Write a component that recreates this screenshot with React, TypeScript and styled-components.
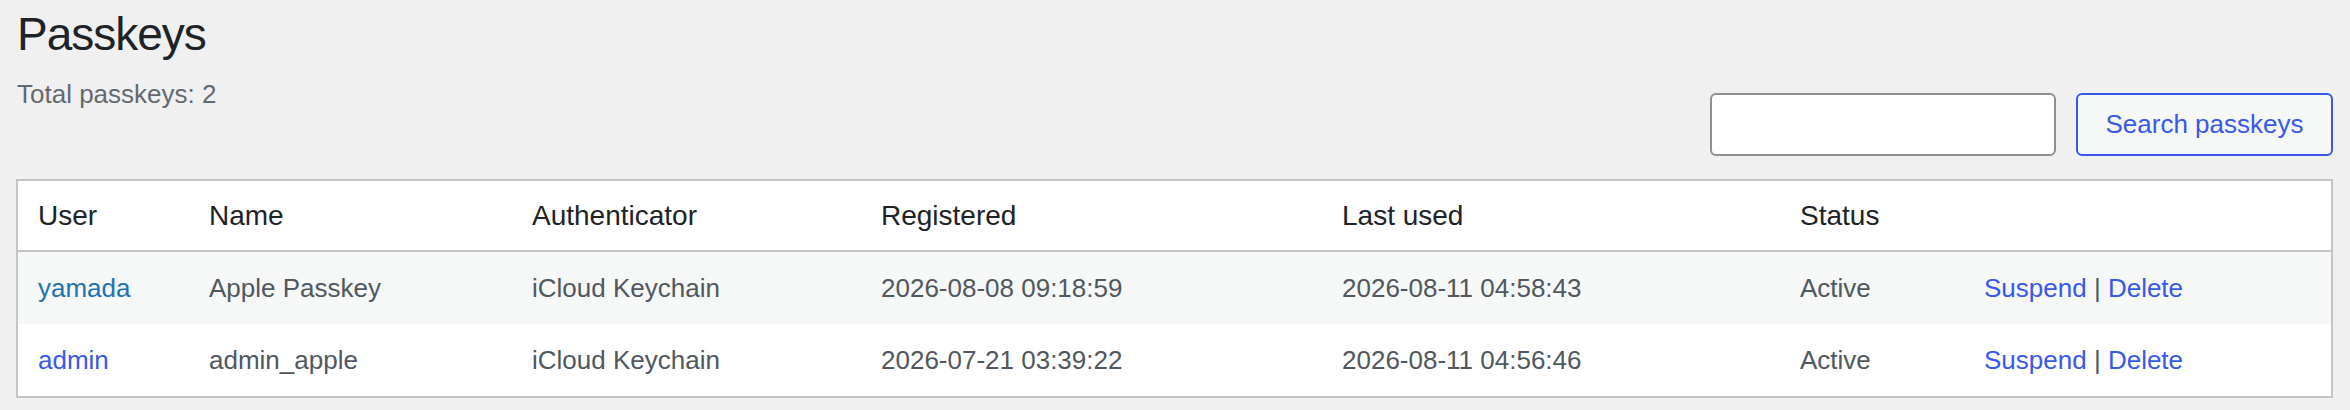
import React, { useState } from "react";
import styled, { createGlobalStyle } from "styled-components";

const GlobalStyle = createGlobalStyle`
  html, body {
    margin: 0;
    padding: 0;
    background: #f0f0f1;
    font-family: "Liberation Sans", Arial, sans-serif;
    color: #1d2327;
  }
`;

const Wrap = styled.div`
  padding: 0 17px 0 16px;
`;

const Title = styled.h1`
  margin: 0 0 10px;
  padding: 5px 0 0 1px;
  font-size: 46px;
  font-weight: 400;
  line-height: 1.3;
  letter-spacing: -1px;
  color: #1d2327;
`;

const TopRow = styled.div`
  display: flex;
  justify-content: space-between;
  align-items: flex-start;
  margin-bottom: 23px;
`;

const Count = styled.p`
  margin: 0;
  padding-left: 1px;
  font-size: 26px;
  line-height: 39px;
  color: #646970;
`;

const SearchForm = styled.form`
  display: flex;
  gap: 20px;
  margin-top: 18px;
`;

const SearchInput = styled.input.attrs({ type: "search" })`
  box-sizing: border-box;
  width: 346px;
  height: 63px;
  border: 2px solid #8c8f94;
  border-radius: 6px;
  background: #fff;
  padding: 0 16px;
  font-size: 26px;
  font-family: inherit;
  outline: none;
`;

const Button = styled.button`
  box-sizing: border-box;
  width: 257px;
  height: 63px;
  padding: 0;
  border: 2px solid #3858e9;
  border-radius: 6px;
  background: #f6f7f7;
  color: #3858e9;
  font-size: 26px;
  font-family: inherit;
  cursor: pointer;
`;

const Table = styled.table`
  width: 100%;
  table-layout: fixed;
  border-collapse: separate;
  border-spacing: 0;
  background: #fff;
  border: 2px solid #c3c4c7;
`;

const Th = styled.th<{ $w?: number }>`
  box-sizing: border-box;
  width: ${(p) => (p.$w ? `${p.$w}px` : "auto")};
  text-align: left;
  font-weight: 400;
  font-size: 28px;
  line-height: 37px;
  padding: 16px 20px;
  color: #1d2327;
  border-bottom: 2px solid #c3c4c7;
`;

const Tr = styled.tr<{ $alt?: boolean }>`
  background: ${(p) => (p.$alt ? "#f6f7f7" : "#fff")};
`;

const Td = styled.td`
  font-size: 26px;
  line-height: 40px;
  padding: 16px 20px;
  color: #50575e;
  white-space: nowrap;
`;

const Link = styled.a<{ $visited?: boolean }>`
  color: ${(p) => (p.$visited ? "#2271b1" : "#3858e9")};
  text-decoration: none;
  cursor: pointer;
`;

const Sep = styled.span`
  color: #50575e;
`;

type Passkey = {
  user: string;
  visited: boolean;
  name: string;
  authenticator: string;
  registered: string;
  lastUsed: string;
  status: string;
};

const rows: Passkey[] = [
  {
    user: "yamada",
    visited: true,
    name: "Apple Passkey",
    authenticator: "iCloud Keychain",
    registered: "2026-08-08 09:18:59",
    lastUsed: "2026-08-11 04:58:43",
    status: "Active",
  },
  {
    user: "admin",
    visited: false,
    name: "admin_apple",
    authenticator: "iCloud Keychain",
    registered: "2026-07-21 03:39:22",
    lastUsed: "2026-08-11 04:56:46",
    status: "Active",
  },
];

export default function App() {
  const [query, setQuery] = useState("");

  return (
    <>
      <GlobalStyle />
      <Wrap>
        <Title>Passkeys</Title>
        <TopRow>
          <Count>Total passkeys: {rows.length}</Count>
          <SearchForm onSubmit={(e) => e.preventDefault()}>
            <SearchInput value={query} onChange={(e) => setQuery(e.target.value)} />
            <Button type="submit">Search passkeys</Button>
          </SearchForm>
        </TopRow>
        <Table>
          <thead>
            <tr>
              <Th $w={171}>User</Th>
              <Th $w={323}>Name</Th>
              <Th $w={349}>Authenticator</Th>
              <Th $w={461}>Registered</Th>
              <Th $w={458}>Last used</Th>
              <Th $w={184}>Status</Th>
              <Th></Th>
            </tr>
          </thead>
          <tbody>
            {rows.map((r, i) => (
              <Tr key={r.user} $alt={i % 2 === 0}>
                <Td>
                  <Link $visited={r.visited}>{r.user}</Link>
                </Td>
                <Td>{r.name}</Td>
                <Td>{r.authenticator}</Td>
                <Td>{r.registered}</Td>
                <Td>{r.lastUsed}</Td>
                <Td>{r.status}</Td>
                <Td>
                  <Link>Suspend</Link> <Sep>|</Sep> <Link>Delete</Link>
                </Td>
              </Tr>
            ))}
          </tbody>
        </Table>
      </Wrap>
    </>
  );
}
